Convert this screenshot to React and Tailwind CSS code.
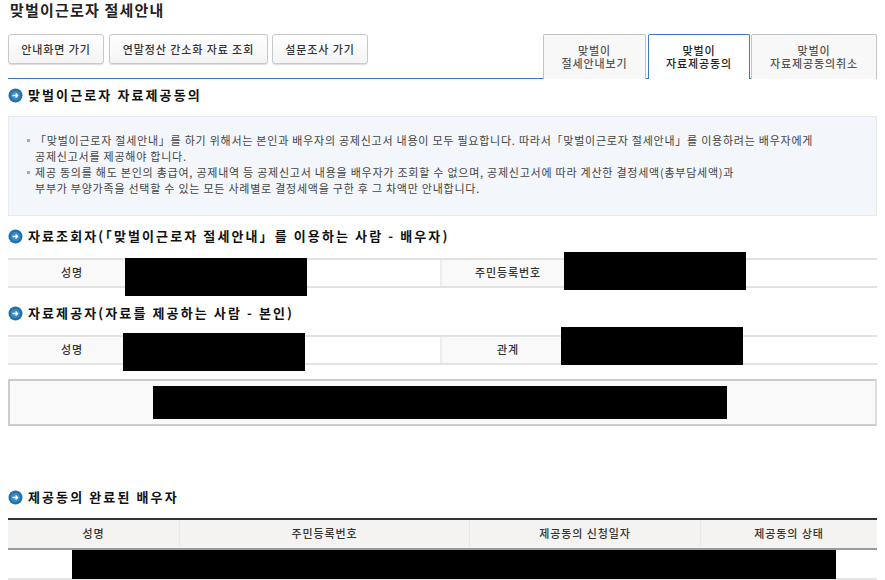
import React from 'react';

const font = { fontFamily: '"Noto Sans CJK KR", "DejaVu Sans", sans-serif' };

function Redact({ className }) {
  return <div className={`absolute bg-black ${className}`} />;
}

function Heading({ children, className = '' }) {
  return (
    <div className={`flex items-center h-[20px] ${className}`}>
      <svg width="15" height="15" viewBox="0 0 15 15" className="shrink-0">
        <circle cx="7.5" cy="7.5" r="7" fill="#1f72ad" />
        <circle cx="7.5" cy="7.5" r="4.6" fill="#3b8cc6" />
        <path d="M4.5 7.5h5M7.6 5.5l2 2-2 2" stroke="#fff" strokeWidth="1.3" fill="none" />
      </svg>
      <h2 className="ml-[5px] text-[13px] font-bold text-[#111] tracking-[2.1px] leading-[20px] whitespace-nowrap">{children}</h2>
    </div>
  );
}

function NavButton({ children, className = '' }) {
  return (
    <button className={`h-[30px] rounded-[3px] border border-[#c8c8c8] bg-gradient-to-b from-white to-[#f4f4f4] shadow-[0_1px_1px_#ddd] text-[11px] font-medium text-[#333] tracking-[0.9px] ${className}`}>
      {children}
    </button>
  );
}

function Tab({ top, bottom, active, className = '' }) {
  return (
    <div
      className={`flex items-center justify-center h-[45px] pb-[1px] rounded-t-[2px] text-center text-[11px] font-medium leading-[13px] tracking-[0.85px] ${
        active
          ? 'bg-white text-[#222] border border-[#3f78bd] border-b-0 -mb-[1px] relative'
          : 'bg-[#f8f8f8] text-[#555] border border-[#c4c4c4] border-b-0'
      } ${className}`}
    >
      <p>{top}<br />{bottom}</p>
    </div>
  );
}

function InfoRow({ leftLabel, rightLabel, className = '' }) {
  return (
    <div className={`flex h-[30px] border-y-2 border-[#e2e2e2] text-[11px] font-medium text-[#333] tracking-[0.9px] ${className}`}>
      <div className="w-[128px] pb-[2px] bg-[#f9f9f9] flex items-center justify-center">{leftLabel}</div>
      <div className="w-[306px] bg-white border-r-2 border-[#eeeeee]" />
      <div className="w-[132px] pb-[2px] bg-[#f9f9f9] flex items-center justify-center">{rightLabel}</div>
      <div className="flex-1 bg-white" />
    </div>
  );
}

function GuideItem({ children }) {
  return (
    <div className="flex">
      <span className="mt-[7px] mr-[5px] w-[3px] h-[3px] shrink-0 bg-[#aaa]" />
      <p className="whitespace-nowrap">{children}</p>
    </div>
  );
}

export default function App() {
  return (
    <div className="relative w-[885px] h-[580px] overflow-hidden bg-white px-[8px]" style={font}>
      <h1 className="h-[34px] pl-[2px] text-[15px] font-bold text-[#222] leading-[20px] tracking-[1.2px]">
        맞벌이근로자 절세안내
      </h1>

      {/* top buttons and tabs */}
      <div className="relative flex justify-between h-[45px] border-b border-[#3f78bd]">
        <div className="flex items-start">
          <NavButton className="w-[96px]">안내화면 가기</NavButton>
          <NavButton className="w-[159px] ml-[5px]">연말정산 간소화 자료 조회</NavButton>
          <NavButton className="w-[96px] ml-[4px]">설문조사 가기</NavButton>
        </div>
        <div className="flex items-start">
          <Tab top="맞벌이" bottom="절세안내보기" className="w-[103px]" />
          <Tab top="맞벌이" bottom="자료제공동의" active className="w-[102px] ml-[2px]" />
          <Tab top="맞벌이" bottom="자료제공동의취소" className="w-[126px] ml-[1px]" />
        </div>
      </div>

      <Heading className="mt-[6px]">맞벌이근로자 자료제공동의</Heading>

      {/* guide box */}
      <div className="mt-[11px] h-[100px] bg-[#f3f6fb] border border-[#e6ebf3] pt-[15px] pl-[18px] text-[11px] leading-[16px] text-[#444] tracking-[0.76px]">
        <GuideItem>「맞벌이근로자 절세안내」를 하기 위해서는 본인과 배우자의 공제신고서 내용이 모두 필요합니다. 따라서「맞벌이근로자 절세안내」를 이용하려는 배우자에게<br />공제신고서를 제공해야 합니다.</GuideItem>
        <GuideItem>제공 동의를 해도 본인의 총급여, 공제내역 등 공제신고서 내용을 배우자가 조회할 수 없으며, 공제신고서에 따라 계산한 결정세액(총부담세액)과<br />부부가 부양가족을 선택할 수 있는 모든 사례별로 결정세액을 구한 후 그 차액만 안내합니다.</GuideItem>
      </div>

      <Heading className="mt-[10px]">자료조회자(「맞벌이근로자 절세안내」를 이용하는 사람 - 배우자)</Heading>
      <InfoRow className="mt-[12px]" leftLabel="성명" rightLabel="주민등록번호" />

      <Heading className="mt-[15px]">자료제공자(자료를 제공하는 사람 - 본인)</Heading>
      <InfoRow className="mt-[12px]" leftLabel="성명" rightLabel="관계" />

      <div className="mt-[14px] h-[47px] bg-[#f9f9f9] border-2 border-[#cccccc] border-r-[#dddddd]" />

      <Heading className="mt-[61px]">제공동의 완료된 배우자</Heading>

      {/* completed spouses */}
      <div className="mt-[11px] border-t-2 border-[#333]">
        <div className="flex h-[30px] pb-[1px] bg-[#f4f3f1] border-b-2 border-[#999] text-[11px] font-medium text-[#333] tracking-[0.9px]">
          <div className="w-[172px] flex items-center justify-center border-r border-[#e9e8e6]">성명</div>
          <div className="w-[290px] flex items-center justify-center border-r border-[#e9e8e6]">주민등록번호</div>
          <div className="w-[231px] flex items-center justify-center border-r border-[#e9e8e6]">제공동의 신청일자</div>
          <div className="flex-1 flex items-center justify-center">제공동의 상태</div>
        </div>
      </div>

      {/* masked values */}
      <Redact className="left-[125px] top-[258px] w-[182px] h-[38px]" />
      <Redact className="left-[564px] top-[252px] w-[182px] h-[38px]" />
      <Redact className="left-[123px] top-[333px] w-[182px] h-[38px]" />
      <Redact className="left-[561px] top-[327px] w-[182px] h-[38px]" />
      <Redact className="left-[153px] top-[386px] w-[574px] h-[33px]" />
      <div className="absolute left-[8px] top-[578px] w-[869px] h-[2px] bg-[#e6e6e6]" />
      <Redact className="left-[72px] top-[550px] w-[764px] h-[29px]" />
    </div>
  );
}
